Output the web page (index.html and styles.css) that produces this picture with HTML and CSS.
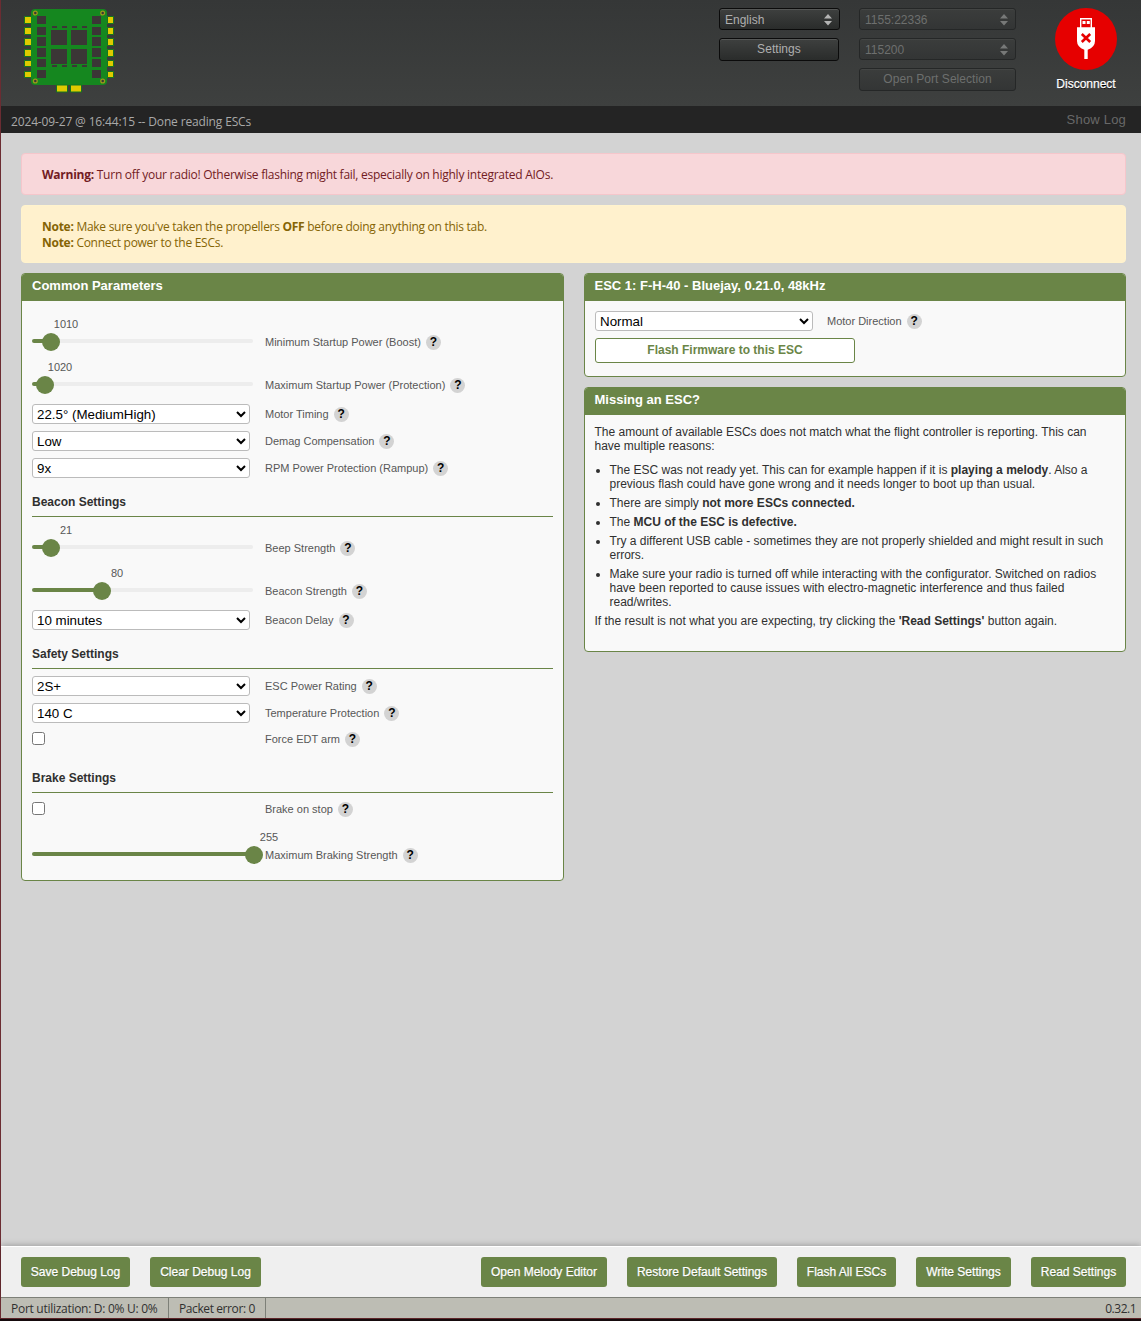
FILE: index.html
```html
<!DOCTYPE html>
<html lang="en">
<head>
<meta charset="utf-8">
<title>ESC Configurator</title>
<link rel="stylesheet" href="styles.css">
</head>
<body>
<div class="app">
  <header class="top">
    <svg class="logo" width="92" height="86" viewBox="0 0 92 86">
      <g fill="#dfcb00" stroke="#16751f" stroke-width="1">
        <path d="M.5 8.500h7v7h-7zM.5 19.500h7v7h-7zM.5 30.500h7v7h-7zM.5 41.500h7v7h-7zM.5 52.500h7v6h-7zM.5 63.500h7v6h-7z"/>
        <path d="M83.500 8.500h6v7h-6zM83.500 19.500h6v7h-6zM83.500 30.500h6v7h-6zM83.500 41.500h6v7h-6zM83.500 52.500h6v6h-6zM83.500 63.500h6v6h-6z"/>
      </g>
      <rect x="7" y="1" width="76" height="76" rx="4" fill="#15871f"/>
      <g fill="#dfcb00" stroke="#16751f"><path d="M32.500 77h11v7h-11zM46.500 77h11v7h-11z"/></g>
      <g fill="#3b3636">
        <path d="M13 8h9v8h-9zM13 19h9v8h-9zM13 29h9v9h-9zM13 40h9v9h-9zM13 51h9v8h-9zM13 62h9v8h-9z"/>
        <path d="M68 8h9v8h-9zM68 19h9v8h-9zM68 29h9v9h-9zM68 40h9v9h-9zM68 51h9v8h-9zM68 62h9v8h-9z"/>
        <path d="M27 22h16v15h-16zM47 22h16v15h-16zM27 41h16v15h-16zM47 41h16v15h-16z"/>
        <path d="M28 18h5v2h-5zM38 18h5v2h-5zM48 18h5v2h-5zM58 18h5v2h-5zM28 57h5v2h-5zM38 57h5v2h-5zM48 57h5v2h-5zM58 57h5v2h-5z"/>
      </g>
      <g fill="#3b3636" stroke="#9b9a1a" stroke-width="1.300">
        <circle cx="11.300" cy="5" r="1.900"/><circle cx="78.700" cy="5" r="1.900"/><circle cx="11.300" cy="73" r="1.900"/><circle cx="78.700" cy="73" r="1.900"/>
      </g>
    </svg>
    <div class="controls">
      <div class="stack lang">
        <div class="dark-select"><span>English</span><svg width="8" height="12" viewBox="0 0 8 12"><path d="M0 4.500 4 0l4 4.500zM0 7h8l-4 4.500z"/></svg></div>
        <button class="dark-btn">Settings</button>
      </div>
      <div class="stack port">
        <div class="dark-select off"><span>1155:22336</span><svg width="8" height="12" viewBox="0 0 8 12"><path d="M0 4.500 4 0l4 4.500zM0 7h8l-4 4.500z"/></svg></div>
        <div class="dark-select off"><span>115200</span><svg width="8" height="12" viewBox="0 0 8 12"><path d="M0 4.500 4 0l4 4.500zM0 7h8l-4 4.500z"/></svg></div>
        <button class="dark-btn off">Open Port Selection</button>
      </div>
      <div class="connect">
        <svg width="62" height="62" viewBox="0 0 62 62">
          <circle cx="31" cy="31" r="31" fill="#e60000"/>
          <path fill="#fff" d="M25 10h12v9.300h3V33q0 6-7.300 8.800V51h-3.400v-9.200Q22 39 22 33V19.300h3z"/>
          <path fill="#e60000" d="M26.400 11.400h9.200v7.900h-9.200z"/>
          <path fill="#fff" d="M27.500 13h3v3h-3zM31.800 13h3v3h-3z"/>
          <path d="m26.800 26 8.400 8m0-8-8.400 8" stroke="#e60000" stroke-width="2.600"/>
        </svg>
        <span>Disconnect</span>
      </div>
    </div>
  </header>
  <div class="log"><span class="log-text">2024-09-27 @ 16:44:15 -- Done reading ESCs</span><span class="show">Show Log</span></div>

  <main>
    <div class="alert danger"><p><b>Warning:</b> Turn off your radio! Otherwise flashing might fail, especially on highly integrated AIOs.</p></div>
    <div class="alert note">
      <p><b>Note:</b> Make sure you've taken the propellers <b>OFF</b> before doing anything on this tab.</p>
      <p><b>Note:</b> Connect power to the ESCs.</p>
    </div>
    <div class="columns">
      <section class="panel common">
        <h2>Common Parameters</h2>
        <div class="body">
          <div class="row slider"><div class="range" style="--at:19px"><output>1010</output><i></i></div><label>Minimum Startup Power (Boost)</label><span class="help">?</span></div>
          <div class="row slider"><div class="range" style="--at:13px"><output>1020</output><i></i></div><label>Maximum Startup Power (Protection)</label><span class="help">?</span></div>
          <div class="row"><div class="field"><select><option>22.5° (MediumHigh)</option></select></div><label>Motor Timing</label><span class="help">?</span></div>
          <div class="row"><div class="field"><select><option>Low</option></select></div><label>Demag Compensation</label><span class="help">?</span></div>
          <div class="row"><div class="field"><select><option>9x</option></select></div><label>RPM Power Protection (Rampup)</label><span class="help">?</span></div>
          <h3>Beacon Settings</h3>
          <div class="row slider"><div class="range" style="--at:19px"><output>21</output><i></i></div><label>Beep Strength</label><span class="help">?</span></div>
          <div class="row slider"><div class="range" style="--at:70px"><output>80</output><i></i></div><label>Beacon Strength</label><span class="help">?</span></div>
          <div class="row"><div class="field"><select><option>10 minutes</option></select></div><label>Beacon Delay</label><span class="help">?</span></div>
          <h3>Safety Settings</h3>
          <div class="row"><div class="field"><select><option>2S+</option></select></div><label>ESC Power Rating</label><span class="help">?</span></div>
          <div class="row"><div class="field"><select><option>140 C</option></select></div><label>Temperature Protection</label><span class="help">?</span></div>
          <div class="row check"><div class="field"><input type="checkbox"></div><label>Force EDT arm</label><span class="help">?</span></div>
          <h3>Brake Settings</h3>
          <div class="row check"><div class="field"><input type="checkbox"></div><label>Brake on stop</label><span class="help">?</span></div>
          <div class="row slider"><div class="range" style="--at:222px"><output>255</output><i></i></div><label>Maximum Braking Strength</label><span class="help">?</span></div>
        </div>
      </section>
      <div class="side">
        <section class="panel esc">
          <h2>ESC 1: F-H-40 - Bluejay, 0.21.0, 48kHz</h2>
          <div class="body">
            <div class="row"><div class="field"><select><option>Normal</option></select></div><label>Motor Direction</label><span class="help">?</span></div>
            <button class="flash">Flash Firmware to this ESC</button>
          </div>
        </section>
        <section class="panel missing">
          <h2>Missing an ESC?</h2>
          <div class="body">
            <p>The amount of available ESCs does not match what the flight controller is reporting. This can<br>have multiple reasons:</p>
            <ul>
              <li>The ESC was not ready yet. This can for example happen if it is <b>playing a melody</b>. Also a<br>previous flash could have gone wrong and it needs longer to boot up than usual.</li>
              <li>There are simply <b>not more ESCs connected.</b></li>
              <li>The <b>MCU of the ESC is defective.</b></li>
              <li>Try a different USB cable - sometimes they are not properly shielded and might result in such<br>errors.</li>
              <li>Make sure your radio is turned off while interacting with the configurator. Switched on radios<br>have been reported to cause issues with electro-magnetic interference and thus failed<br>read/writes.</li>
            </ul>
            <p>If the result is not what you are expecting, try clicking the <b>'Read Settings'</b> button again.</p>
          </div>
        </section>
      </div>
    </div>
  </main>

  <div class="toolbar">
    <button style="width:109px">Save Debug Log</button>
    <button style="width:111px">Clear Debug Log</button>
    <span class="space"></span>
    <button style="width:126px">Open Melody Editor</button>
    <button style="width:150px">Restore Default Settings</button>
    <button style="width:99px">Flash All ESCs</button>
    <button style="width:95px">Write Settings</button>
    <button style="width:95px">Read Settings</button>
  </div>
  <footer class="status">
    <span class="util">Port utilization: D: 0% U: 0%</span><span class="err">Packet error: 0</span><span class="version">0.32.1</span>
  </footer>
</div>
</body>
</html>
```
FILE: styles.css
```css
* { box-sizing: border-box; }
body, p, h2, h3, ul { margin: 0; }
body {
  font-family: "Liberation Sans", Arial, sans-serif;
  font-size: 12px;
  line-height: 14px;
  color: #303030;
  background: #150a0c;
}
button { font-family: inherit; padding: 0; }
.app {
  display: flex;
  flex-direction: column;
  height: 1319px;
  border-left: 1px solid #6b2c32;
  border-bottom: 1px solid #5e2529;
  background: #d3d3d3;
}

/* top bar */
.top {
  display: flex;
  justify-content: space-between;
  flex: none;
  height: 106px;
  padding: 8px 24px 0 23px;
  background: linear-gradient(#353737, #3e403f);
}
.controls { display: flex; }
.stack { display: flex; flex-direction: column; gap: 8px; }
.lang { width: 121px; margin-right: 19px; }
.port { width: 157px; margin-right: 39px; }
.dark-select, .dark-btn {
  border: 1px solid #0b0b0b;
  border-radius: 3px;
  background: linear-gradient(#3e403f, #2a2c2b);
  box-shadow: inset 0 1px 0 #555756;
  color: #afafaf;
  font-size: 12px;
}
.dark-select {
  display: flex;
  align-items: center;
  justify-content: space-between;
  height: 22px;
  padding: 1px 7px 0 5px;
}
.dark-select svg { fill: #b4b4b4; }
.dark-btn { height: 23px; padding-bottom: 1px; letter-spacing: .05px; }
.lang .dark-btn { width: 120px; }
.dark-select.off, .dark-btn.off { border-color: #252727; background: linear-gradient(#3b3d3c, #333535); box-shadow: inset 0 1px 0 #434544; color: #6d6f6e; }
.dark-select.off svg { fill: #777978; }
.connect { display: flex; flex-direction: column; align-items: center; width: 62px; color: #fff; text-shadow: 0 1px #000; }
.connect span { margin-top: 7px; -webkit-text-stroke: .25px #fff; }

.log {
  display: flex;
  justify-content: space-between;
  flex: none;
  height: 27px;
  padding: 0 15px 0 10px;
  background: #242424;
  color: #a9a9a9;
}
.log-text { font: 12px/32px "Open Sans", sans-serif; letter-spacing: -.15px; }
.show { font-size: 13px; line-height: 28px; color: #686868; letter-spacing: .2px; }

/* notices */
main { flex: 1; padding: 20px 15px 0 20px; }
.alert {
  padding: 13px 20px;
  border: 1px solid #f5c6cb;
  border-radius: 4px;
  font: 12px/16px "Open Sans", sans-serif;
  letter-spacing: -.255px;
}
.danger { height: 42px; background: #f8d7da; color: #721c24; }
.note { height: 58px; margin: 10px 0; border-color: #fff3cd; background: #fff1cd; color: #856404; letter-spacing: -.275px; }

/* panels */
.columns { display: flex; align-items: flex-start; gap: 20px; }
.common { width: 543px; }
.side { display: flex; flex-direction: column; gap: 10px; width: 542px; }
.panel { overflow: hidden; border: 1px solid #6a8547; border-radius: 4px; background: #f9f9f9; }
.panel h2 { height: 27px; padding-left: 10px; background: #6a8547; color: #fff; font-size: 13px; line-height: 24px; }
.side h2 { padding-left: 9.500px; }
.body { padding: 12px 10px 11px; }
.body h3 {
  height: 37px;
  margin-bottom: 2px;
  padding-top: 15px;
  border-bottom: 1px solid #6a8547;
  font-size: 12px;
}
.row { display: flex; align-items: flex-start; height: 27px; padding-top: 5px; }
.field { flex: none; width: 233px; height: 20px; }
.row label { color: #575757; font-size: 11px; line-height: 20px; }
.help {
  width: 15px;
  height: 15px;
  margin: 3px 0 0 5px;
  border-radius: 50%;
  background: #d3d3d3;
  color: #000;
  font-size: 12px;
  font-weight: bold;
  line-height: 15px;
  text-align: center;
}
select {
  display: block;
  width: 218px;
  height: 20px;
  padding: 0;
  border: 1px solid #bbb;
  border-radius: 3px;
  background-color: #fff;
  color: #000;
  font: 13.333px "Liberation Sans", Arial, sans-serif;
}
.check { height: 31px; padding-top: 4px; }
.check input { display: block; width: 13px; height: 13px; margin: 3px 0 0; }
.slider { height: 43px; padding-top: 19px; }
.range { flex: none; position: relative; width: 221px; height: 4px; margin: 7px 12px 0 0; border-radius: 2px; background: linear-gradient(#6a8547, #6a8547) 0 0 / var(--at) 4px no-repeat #ededed; }
.range i { position: absolute; left: calc(var(--at) - 9px); top: -6px; width: 18px; height: 18px; border-radius: 50%; background: #6a8547; }
.range output { position: absolute; left: calc(var(--at) + 15px); top: -22px; transform: translateX(-50%); color: #575757; font-size: 11px; }
.esc .body { height: 75px; padding-top: 5px; }
.esc .field { width: 232px; }
.flash {
  display: block;
  width: 260px;
  height: 25px;
  margin-top: 5px;
  padding-bottom: 1px;
  border: 1px solid #6a8547;
  border-radius: 3px;
  background: #fff;
  color: #6a8547;
  font-size: 12px;
  font-weight: bold;
}
.missing .body { height: 236px; padding: 10px 9.500px; }
.missing ul { margin: 10px 0 5px; padding-left: 15px; }
.missing li + li { margin-top: 5px; }

/* bottom bars */
.toolbar {
  display: flex;
  gap: 20px;
  position: relative;
  flex: none;
  height: 51px;
  padding: 10px 15px 0 20px;
  border-top: 1px solid #fff;
  background: #efefef;
  box-shadow: 0 -1px 6px rgba(0, 0, 0, .25);
}
.toolbar button { height: 30px; border: 0; border-radius: 3px; background: #6a8547; color: #fff; font-size: 12px; text-shadow: 0 1px rgba(0, 0, 0, .25); -webkit-text-stroke: .25px #fff; }
.space { flex: 1; margin-right: -20px; }
.status {
  display: flex;
  position: relative;
  flex: none;
  height: 21px;
  border-top: 1px solid #7d8078;
  background: #bdbdb4;
  font: 12px/21px "Open Sans", sans-serif;
  letter-spacing: -.28px;
}
.util { width: 168px; padding-left: 10px; border-right: 1px solid #7d8078; }
.err { width: 97px; padding-left: 10px; border-right: 1px solid #7d8078; letter-spacing: -.4px; }
.version { margin-left: auto; padding-right: 5px; letter-spacing: -.5px; }
```
